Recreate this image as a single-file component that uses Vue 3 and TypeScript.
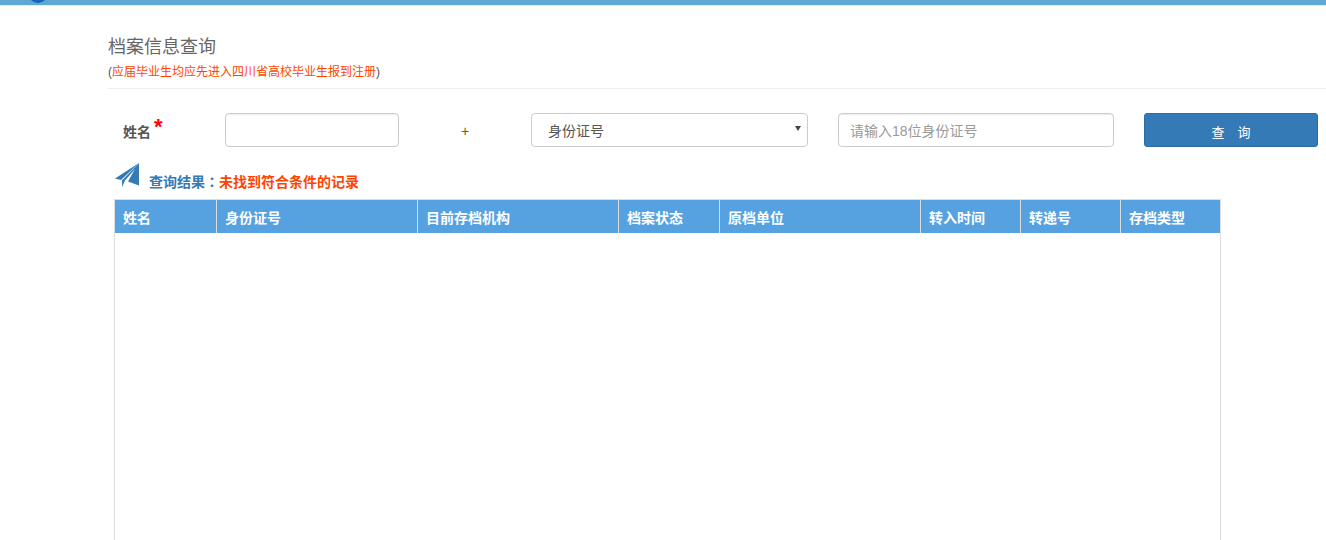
<script setup lang="ts">
const cols = [
  { label: '姓名', width: 102 },
  { label: '身份证号', width: 201 },
  { label: '目前存档机构', width: 201 },
  { label: '档案状态', width: 101 },
  { label: '原档单位', width: 201 },
  { label: '转入时间', width: 100 },
  { label: '转递号', width: 100 },
  { label: '存档类型', width: 101 },
]
</script>

<template>
  <div class="page">
    <div class="topbar">
      <svg class="logo" width="24" height="5" viewBox="0 0 24 5"><ellipse cx="12" cy="-7" rx="10" ry="10" fill="#1565b8" /></svg>
    </div>
    <div class="content">
      <h1 class="title">档案信息查询</h1>
      <p class="note">(<span>应届毕业生均应先进入四川省高校毕业生报到注册</span>)</p>
      <div class="form">
        <label class="name-label">姓名<i>*</i></label>
        <input class="field name-input" />
        <span class="plus">+</span>
        <div class="field select">身份证号<b></b></div>
        <input class="field id-input" placeholder="请输入18位身份证号" />
        <button class="btn">查询</button>
      </div>
      <div class="result">
        <svg width="26" height="25" viewBox="0 0 26 25">
          <path d="M1 15.5 25 0 7 17Z" fill="#337ab7" />
          <path d="M25 0V22.5L14 18.5 21 6 11 17.5 8 24V17.5Z" fill="#337ab7" />
        </svg>
        <span class="r-label">查询结果<span class="colon">：</span></span><span class="r-msg">未找到符合条件的记录</span>
      </div>
      <div class="table">
        <div class="thead">
          <div v-for="c in cols" :key="c.label" class="th" :style="{ width: c.width + 'px' }">{{ c.label }}</div>
        </div>
      </div>
    </div>
  </div>
</template>

<style>
html, body { margin: 0; background: #fff; overflow: hidden; }
</style>

<style scoped>
.page { width: 1326px; height: 540px; overflow: hidden; font-family: "Liberation Sans", "Noto Sans CJK SC", sans-serif; font-size: 14px; color: #555; }
.topbar { height: 5px; background: #5fa8d3; border-bottom: 1px solid #e4edf3; }
.logo { display: block; margin-left: 26px; }
.content { padding: 29px 0 0 108px; }
.title { margin: 0; font-size: 18px; font-weight: 400; line-height: 24px; color: #666; }
.note { margin: 5px 0 0; font-size: 12px; line-height: 16px; color: #555; padding-bottom: 8px; border-bottom: 1px solid #eee; }
.note span { color: #ff4400; }
.form { display: flex; align-items: center; height: 34px; margin-top: 24px; }
.name-label { width: 102px; margin-left: 15px; padding-top: 2px; font-weight: 700; font-size: 14px; position: relative; flex: none; }
.name-label i { color: #f00; font-style: normal; font-size: 22px; line-height: 10px; position: absolute; left: 31px; top: 3px; }
.field { box-sizing: border-box; height: 34px; border: 1px solid #ccc; border-radius: 4px; background: #fff; font: inherit; color: #555; box-shadow: inset 0 1px 1px rgba(0,0,0,.075); flex: none; outline: none; }
.name-input { width: 174px; }
.plus { width: 132px; padding-top: 2px; text-align: center; flex: none; color: #4f6b2f; font-size: 14px; }
.select { width: 277px; padding-left: 16px; line-height: 34px; position: relative; box-shadow: none; }
.select b { position: absolute; right: 6px; top: 12px; border: 3px solid transparent; border-top: 5px solid #444; border-bottom: 0; }
.id-input { width: 276px; margin-left: 30px; padding: 2px 12px 0 11px; }
.id-input::placeholder { color: #999; }
.btn { width: 174px; height: 34px; margin-left: 30px; flex: none; background: #337ab7; border: 1px solid #2e6da4; border-radius: 3px; color: #fff; font: inherit; font-size: 13px; letter-spacing: 13px; padding: 2px 0 0 13px; }
.result { display: flex; align-items: flex-end; box-sizing: border-box; height: 36px; margin: 16px 0 0 6px; padding-bottom: 8px; font-size: 14px; font-weight: 700; }
.result svg { margin-right: 9px; margin-bottom: 3px; flex: none; }
.r-label { color: #337ab7; line-height: 18px; }
.colon { font-family: "Noto Sans CJK TC", sans-serif; }
.r-msg { color: #ff4400; line-height: 18px; }
.table { width: 1107px; height: 400px; margin: 0 0 0 6px; box-sizing: border-box; border: 1px solid #ddd; border-bottom: 0; }
.thead { display: flex; height: 33px; background: #56a1e0; }
.th { box-sizing: border-box; padding-left: 8px; line-height: 36px; color: #fff; font-weight: 700; font-size: 14px; border-right: 1px solid #ddd; flex: none; }
.th:last-child { border-right: 0; }
</style>
